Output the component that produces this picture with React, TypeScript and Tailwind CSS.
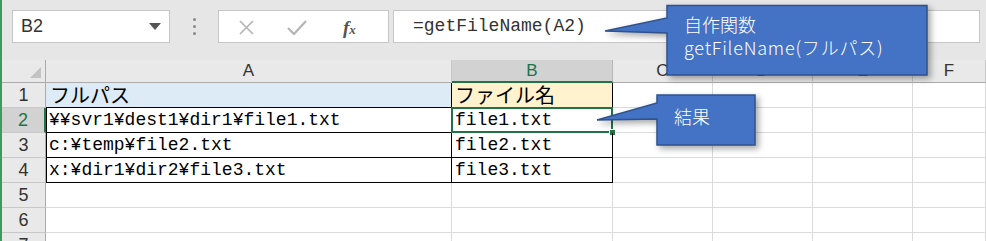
import React from 'react';

const mono = { fontFamily: '"Liberation Mono", "Noto Sans CJK JP", monospace' };
const jp = { fontFamily: '"Noto Sans CJK JP", "Noto Sans", sans-serif' };

const cols = ['A', 'B', 'C', 'D', 'E', 'F'];

function Toolbar() {
    return (
        <div className="flex items-start h-[60px] pt-[10px] pl-[10px] bg-[#e6e6e6]">
            <div className="relative w-[158px] h-[33px] bg-white border border-[#c6c6c6] flex items-center pl-[8px] text-[18px] text-[#333]" style={{ fontFamily: '"Liberation Sans", sans-serif' }}>
                B2
                <svg className="absolute left-[136px] top-[12px]" width="12" height="7" viewBox="0 0 12 7">
                    <path d="M0 0 H12 L6 7 Z" fill="#555" />
                </svg>
            </div>
            <div className="w-[48px] h-[33px] flex flex-col items-center justify-center gap-[4px]">
                <span className="w-[3px] h-[3px] rounded-full bg-[#8a8a8a]" />
                <span className="w-[3px] h-[3px] rounded-full bg-[#8a8a8a]" />
                <span className="w-[3px] h-[3px] rounded-full bg-[#8a8a8a]" />
            </div>
            <div className="relative w-[171px] h-[33px] bg-white border border-[#c6c6c6]">
                <svg className="absolute left-[20px] top-[9px]" width="15" height="15" viewBox="0 0 15 15">
                    <path d="M1 1 L14 14 M14 1 L1 14" stroke="#b4b4b4" strokeWidth="1.6" />
                </svg>
                <svg className="absolute left-[68px] top-[9px]" width="20" height="15" viewBox="0 0 20 15">
                    <path d="M1 8 L7 14 L19 1" stroke="#b4b4b4" strokeWidth="2.2" fill="none" />
                </svg>
                <span className="absolute left-[124px] top-[3px] text-[19px] italic font-bold text-[#555]" style={{ fontFamily: '"Liberation Serif", serif' }}>
                    f<span className="text-[13px]">x</span>
                </span>
            </div>
            <div className="ml-[4px] w-[587px] h-[33px] bg-white border border-[#c6c6c6] flex items-center pl-[19px] text-[18px] text-[#333]" style={mono}>
                =getFileName(A2)
            </div>
        </div>
    );
}

function Callouts() {
    return (
        <>
            <div className="absolute left-[600px] top-0 w-[335px] h-[85px]">
                <svg width="335" height="85" viewBox="0 0 335 85" className="absolute inset-0" style={{ filter: 'drop-shadow(3px 3px 3px rgba(0,0,0,0.35))' }}>
                    <path d="M65 5.5 H325 V75 H65 V33 L3 31 L65 18 Z" fill="#4472c4" stroke="#2f528f" strokeWidth="1.5" />
                </svg>
                <div className="absolute left-[82px] top-[13px] text-white text-[18px] leading-[22px] font-light flex flex-col gap-[1px]" style={jp}>
                    <div>自作関数</div>
                    <div className="tracking-[0.8px]">getFileName(フルパス)</div>
                </div>
            </div>
            <div className="absolute left-[592px] top-[90px] w-[170px] h-[62px]">
                <svg width="170" height="62" viewBox="0 0 170 62" className="absolute inset-0" style={{ filter: 'drop-shadow(3px 3px 3px rgba(0,0,0,0.35))' }}>
                    <path d="M63 5 H161 V55 H63 V29 L3 30 L63 13 Z" fill="#4472c4" stroke="#2f528f" strokeWidth="1.5" />
                </svg>
                <div className="absolute left-[80px] top-[15px] text-white text-[18px] leading-[22px] font-light" style={jp}>結果</div>
            </div>
        </>
    );
}

const rows: { a: string; b: string }[] = [
    { a: 'フルパス', b: 'ファイル名' },
    { a: '¥¥svr1¥dest1¥dir1¥file1.txt', b: 'file1.txt' },
    { a: 'c:¥temp¥file2.txt', b: 'file2.txt' },
    { a: 'x:¥dir1¥dir2¥file3.txt', b: 'file3.txt' },
    { a: '', b: '' },
    { a: '', b: '' },
    { a: '', b: '' },
];

function Grid() {
    return (
        <div className="grid grid-cols-[44px_406px_161px_100px_100px_100px_1fr] auto-rows-[25px] bg-white" style={{ gridTemplateRows: '23px' }}>
            {/* header row */}
            <div className="relative bg-[#e9e9e9] border-r border-b border-[#ababab]">
                <svg className="absolute right-[4px] bottom-[4px]" width="11" height="11" viewBox="0 0 11 11">
                    <path d="M11 0 V11 H0 Z" fill="#c3c3c3" />
                </svg>
            </div>
            {cols.map(c => (
                <div key={c}
                    className={c === 'B'
                        ? 'flex items-center justify-center bg-[#d2d2d2] text-[#217346] border-r border-[#b5b5b5] border-b-2 border-b-[#217346] text-[17px]'
                        : 'flex items-center justify-center bg-[#e9e9e9] text-[#333] border-r border-[#c8c8c8] border-b border-b-[#ababab] text-[17px]'}
                    style={{ fontFamily: '"Liberation Sans", sans-serif' }}>
                    {c}
                </div>
            ))}

            {rows.map((r, i) => {
                const n = i + 1;
                const data = n >= 2 && n <= 4;
                return (
                    <React.Fragment key={n}>
                        <div className={n === 2
                            ? 'flex items-center justify-center bg-[#d2d2d2] text-[#217346] border-r-2 border-r-[#217346] border-b border-b-[#c8c8c8] text-[18px]'
                            : 'flex items-center justify-center bg-[#e9e9e9] text-[#333] border-r border-r-[#ababab] border-b border-b-[#c8c8c8] text-[18px]'}
                            style={{ fontFamily: '"Liberation Sans", sans-serif' }}>
                            {n}
                        </div>
                        <div className={
                            n === 1 ? 'flex items-center pl-[4px] bg-[#ddebf7] border-r border-b border-black text-[20px] text-black'
                                : data ? 'flex items-center pl-[2px] border-l border-r border-b border-black text-[18px] text-black'
                                    : 'border-r border-b border-[#dadada]'}
                            style={n === 1 ? jp : mono}>
                            {r.a}
                        </div>
                        <div className={
                            n === 1 ? 'flex items-center pl-[3px] bg-[#fff2cc] border-r border-b border-black text-[20px] text-black'
                                : data ? 'relative flex items-center pl-[3px] border-r border-b border-black text-[18px] text-black'
                                    : 'border-r border-b border-[#dadada]'}
                            style={n === 1 ? jp : mono}>
                            {r.b}
                            {n === 2 && (
                                <>
                                    <div className="absolute -left-[1px] -top-[1px] -right-[1px] -bottom-[1px] border-2 border-[#217346]" />
                                    <div className="absolute -right-[4px] -bottom-[4px] w-[7px] h-[7px] bg-[#217346] border border-white" />
                                </>
                            )}
                        </div>
                        {[0, 1, 2, 3].map(k => (
                            <div key={k} className="border-r border-b border-[#dadada]" />
                        ))}
                    </React.Fragment>
                );
            })}
        </div>
    );
}

export default function App() {
    return (
        <div className="relative w-[986px] h-[241px] overflow-hidden bg-[#e6e6e6] border-l-2 border-[#3f9a5e]">
            <Toolbar />
            <Grid />
            <Callouts />
        </div>
    );
}
